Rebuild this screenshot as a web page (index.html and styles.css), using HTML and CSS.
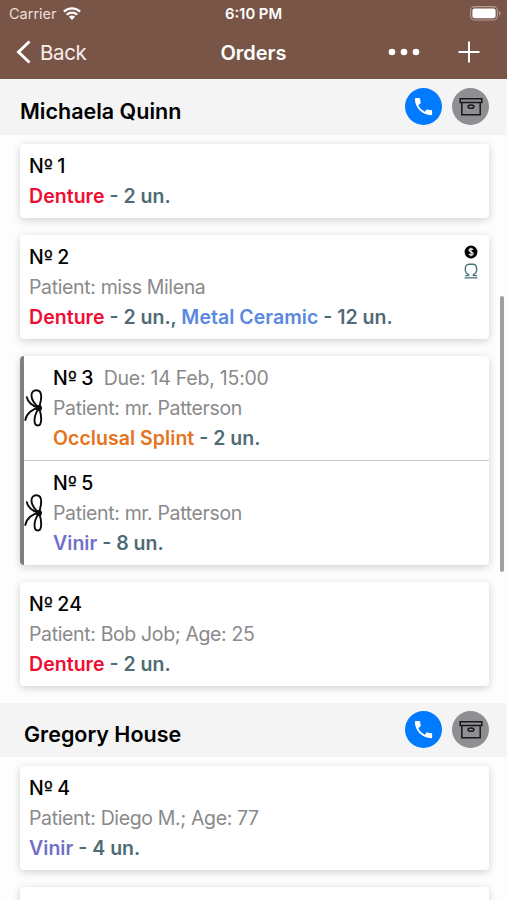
FILE: index.html
```html
<!DOCTYPE html>
<html lang="en">
<head>
<meta charset="utf-8">
<title>Orders</title>
<link rel="stylesheet" href="styles.css">
</head>
<body>
<svg class="defs" width="0" height="0" aria-hidden="true">
  <symbol id="phone" viewBox="0 0 24 24"><path d="M6.6 10.8c1.4 2.8 3.8 5.1 6.6 6.6l2.2-2.2c.3-.3.7-.4 1-.2 1.1.4 2.3.6 3.6.6.6 0 1 .4 1 1V20c0 .6-.4 1-1 1C10.600 21 3 13.400 3 4c0-.6.4-1 1-1h3.500c.6 0 1 .4 1 1 0 1.300.2 2.500.6 3.600.1.300 0 .700-.2 1z" fill="#fff"/></symbol>
  <symbol id="box" viewBox="0 0 24 20"><g fill="none" stroke="#18181b" stroke-width="1.500"><path d="M1.200 1.800h21.600v3.700H1.200zM2.800 5.500v12.200h18.400V5.500"/><ellipse cx="12" cy="9.700" rx="2.900" ry="1.600"/></g></symbol>
  <symbol id="bow" viewBox="0 0 20 40"><g fill="none" stroke="#0b0b0b" stroke-width="1.900" stroke-linecap="round"><path d="M15 20C10.500 16 7.500 11.500 7.500 7.500C7.500 4 9.500 2.300 12.200 2.300C15 2.300 17.200 4.500 17.200 8.500C17.200 12.500 16 16.500 15 20C12 24.500 10.500 28.500 10.500 32C10.500 35.500 12 37.500 13.800 37.500C16 37.500 17.200 35 17.200 31C17.200 27 16.300 23.500 15 20"/><path d="M2.800 9.200C3.500 13.500 8 18.200 15 20C8.500 20.500 2.500 25.500 1.300 32"/></g><circle cx="14.900" cy="20" r="3.100" fill="#0b0b0b"/></symbol>
</svg>
<header class="top">
  <div class="status">
    <div class="carrier"><span>Carrier</span>
      <svg class="wifi" viewBox="0 0 18 13"><g fill="none" stroke="#fff" stroke-width="2.300"><path d="M.9 4.600a11.600 11.600 0 0 1 16.200 0M3.800 7.700a7.400 7.400 0 0 1 10.400 0"/></g><path d="M5.900 9.800a4.400 4.400 0 0 1 6.200 0L9 12.900z" fill="#fff"/></svg>
    </div>
    <span class="clock">6:10 PM</span>
    <svg class="battery" viewBox="0 0 31 15"><rect x=".6" y=".6" width="26.800" height="13.400" rx="4" fill="none" stroke="#b39c92" stroke-width="1.100"/><rect x="2.400" y="2.400" width="23.200" height="9.800" rx="2.300" fill="#fff"/><path d="M29 5c2 .8 2 3.800 0 4.600z" fill="#b39c92"/></svg>
  </div>
  <nav class="nav">
    <div class="back"><svg viewBox="0 0 16 24"><path d="M13.500 1.500L2.500 12l11 10.500" fill="none" stroke="#fff" stroke-width="2.900"/></svg><span>Back</span></div>
    <h1>Orders</h1>
    <div class="actions">
      <svg class="more" viewBox="0 0 32 8"><g fill="#fff"><circle cx="4" cy="4" r="3.300"/><circle cx="16" cy="4" r="3.300"/><circle cx="28" cy="4" r="3.300"/></g></svg>
      <svg class="plus" viewBox="0 0 22 22"><path d="M11 .5v21M.5 11h21" stroke="#fff" stroke-width="2"/></svg>
    </div>
  </nav>
</header>
<main>
  <section>
    <div class="client first"><h2>Michaela Quinn</h2><div class="buttons"><span class="round call"><svg><use href="#phone"/></svg></span><span class="round archive"><svg><use href="#box"/></svg></span></div></div>
    <div class="list">
      <article class="card"><p class="num">N<span class="ord">º</span> 1</p><p class="work"><b class="red">Denture</b> - 2 un.</p></article>
      <article class="card"><p class="num">N<span class="ord">º</span> 2</p><p class="patient">Patient: miss Milena</p><p class="work"><b class="red">Denture</b> - 2 un., <b class="blue">Metal Ceramic</b> - 12 un.</p>
        <div class="marks">
          <svg class="coin" viewBox="0 0 14 14"><circle cx="7" cy="7" r="6.400" fill="#000"/><path d="M9.100 4.800C8.300 3.500 5 3.500 5 5.200C5 7.200 9.200 6.500 9.200 8.700C9.200 10.500 5.500 10.500 4.800 8.900M7 2.700v8.600" fill="none" stroke="#fff" stroke-width="1.100"/></svg>
          <svg class="crown" viewBox="0 0 14 16"><path d="M4.500 13V11.500C2.400 10.700 1.300 9 1.300 6.200C1.300 2.800 2.600 1.200 5 1.200H9C11.400 1.200 12.700 2.800 12.700 6.200C12.700 9 11.600 10.700 9.500 11.500V13" fill="none" stroke="#48717a" stroke-width="1.400"/><path d="M1.200 12.700h4M8.800 12.700h4M.5 14.900h13" fill="none" stroke="#48717a" stroke-width="1.300"/></svg>
        </div>
      </article>
      <div class="card group">
        <article class="item"><svg class="bow"><use href="#bow"/></svg><div><p class="num">N<span class="ord">º</span> 3<span class="due">Due: 14 Feb, 15:00</span></p><p class="patient">Patient: mr. Patterson</p><p class="work"><b class="orange">Occlusal Splint</b> - 2 un.</p></div></article>
        <article class="item"><svg class="bow"><use href="#bow"/></svg><div><p class="num">N<span class="ord">º</span> 5</p><p class="patient">Patient: mr. Patterson</p><p class="work"><b class="violet">Vinir</b> - 8 un.</p></div></article>
      </div>
      <article class="card"><p class="num">N<span class="ord">º</span> 24</p><p class="patient">Patient: Bob Job; Age: 25</p><p class="work"><b class="red">Denture</b> - 2 un.</p></article>
    </div>
  </section>
  <section>
    <div class="client"><h2>Gregory House</h2><div class="buttons"><span class="round call"><svg><use href="#phone"/></svg></span><span class="round archive"><svg><use href="#box"/></svg></span></div></div>
    <div class="list">
      <article class="card"><p class="num">N<span class="ord">º</span> 4</p><p class="patient">Patient: Diego M.; Age: 77</p><p class="work"><b class="violet">Vinir</b> - 4 un.</p></article>
      <article class="card next"></article>
    </div>
  </section>
</main>
<div class="scrollbar"></div>
</body>
</html>
```
FILE: styles.css
```css
* { box-sizing: border-box; }
html, body { height: 900px; overflow: hidden; }
body { margin: 0; position: relative; background: #fdfdfd; color: #000; font-family: Inter, "Liberation Sans", sans-serif; font-size: 19.5px; }
h1, h2, p { margin: 0; }
svg { display: block; flex: none; }
.defs { position: absolute; }
main { height: 821px; overflow: hidden; }

.top { height: 79px; background: #795548; color: #fff; }
.status { height: 27px; display: grid; grid-template-columns: 1fr auto 1fr; align-items: center; padding: 0 8px; }
.carrier { display: flex; align-items: center; gap: 6px; padding-left: 1px; color: #ecdfd9; font-size: 14.500px; }
.wifi { width: 18px; height: 13px; }
.clock { font-weight: 600; font-size: 14.800px; }
.battery { width: 31px; height: 15px; justify-self: end; margin-right: -2px; }
.nav { height: 50px; display: grid; grid-template-columns: 1fr auto 1fr; align-items: center; padding: 0 16px; }
.back { display: flex; align-items: center; gap: 8px; font-size: 20.500px; letter-spacing: -.35px; color: #f7eeea; }
.back svg { width: 16px; height: 24px; }
h1 { padding-top: 1px; font-size: 20px; font-weight: 600; }
.actions { display: flex; align-items: center; justify-content: flex-end; gap: 38px; margin-right: 11px; }
.more { width: 32px; height: 8px; }
.plus { width: 22px; height: 22px; }

.client { height: 54px; display: flex; justify-content: space-between; align-items: flex-start; padding: 8px 18px 0 24px; background: #f4f4f4; }
.client.first { height: 56px; padding: 9px 18px 0 20px; }
h2 { font-size: 21.500px; font-weight: 600; line-height: 46px; }
.buttons { display: flex; gap: 10px; }
.round { width: 37px; height: 37px; border-radius: 50%; display: flex; align-items: center; justify-content: center; }
.call { background: #007aff; }
.call svg { width: 23px; height: 23px; }
.archive { background: #8e8e93; }
.archive svg { width: 24px; height: 20px; }

.list { display: flex; flex-direction: column; gap: 17px; padding: 9px 18px 17px 20px; }
.card { position: relative; padding: 7px 9px; border-radius: 4px; background: #fff; box-shadow: 0 2px 8px rgba(0, 0, 0, .18); }
.card p { height: 30px; line-height: 30px; white-space: nowrap; }
.num { font-weight: 500; letter-spacing: .2px; }
.ord { font-family: "DejaVu Sans", sans-serif; font-size: 18.500px; line-height: 1; letter-spacing: -.8px; -webkit-text-stroke: .3px; }
.due { margin-left: 10px; font-weight: 400; letter-spacing: -.24px; color: #8a8a8a; }
.patient { color: #8a8a8a; letter-spacing: -.36px; }
.work { font-weight: 600; color: #4f6b75; }
.work b { font-weight: 600; letter-spacing: .05px; }
.red { color: #f00d32; }
.blue { color: #5b88e0; }
.orange { color: #e57320; }
.violet { color: #7070c8; }
.marks { position: absolute; top: 10px; right: 11px; display: flex; flex-direction: column; gap: 4px; }
.coin { width: 14px; height: 14px; }
.crown { width: 14px; height: 16px; }
.group { padding: 0; border-left: 4px solid #808080; }
.item { display: flex; align-items: center; gap: 9px; padding: 7px 0; }
.item + .item { border-top: 1px solid #c6c6c6; }
.bow { width: 20px; height: 40px; }
.next { height: 104px; }
.scrollbar { position: absolute; right: 3px; top: 296px; width: 4px; height: 276px; border-radius: 2px; background: #a0a0a0; }
```
